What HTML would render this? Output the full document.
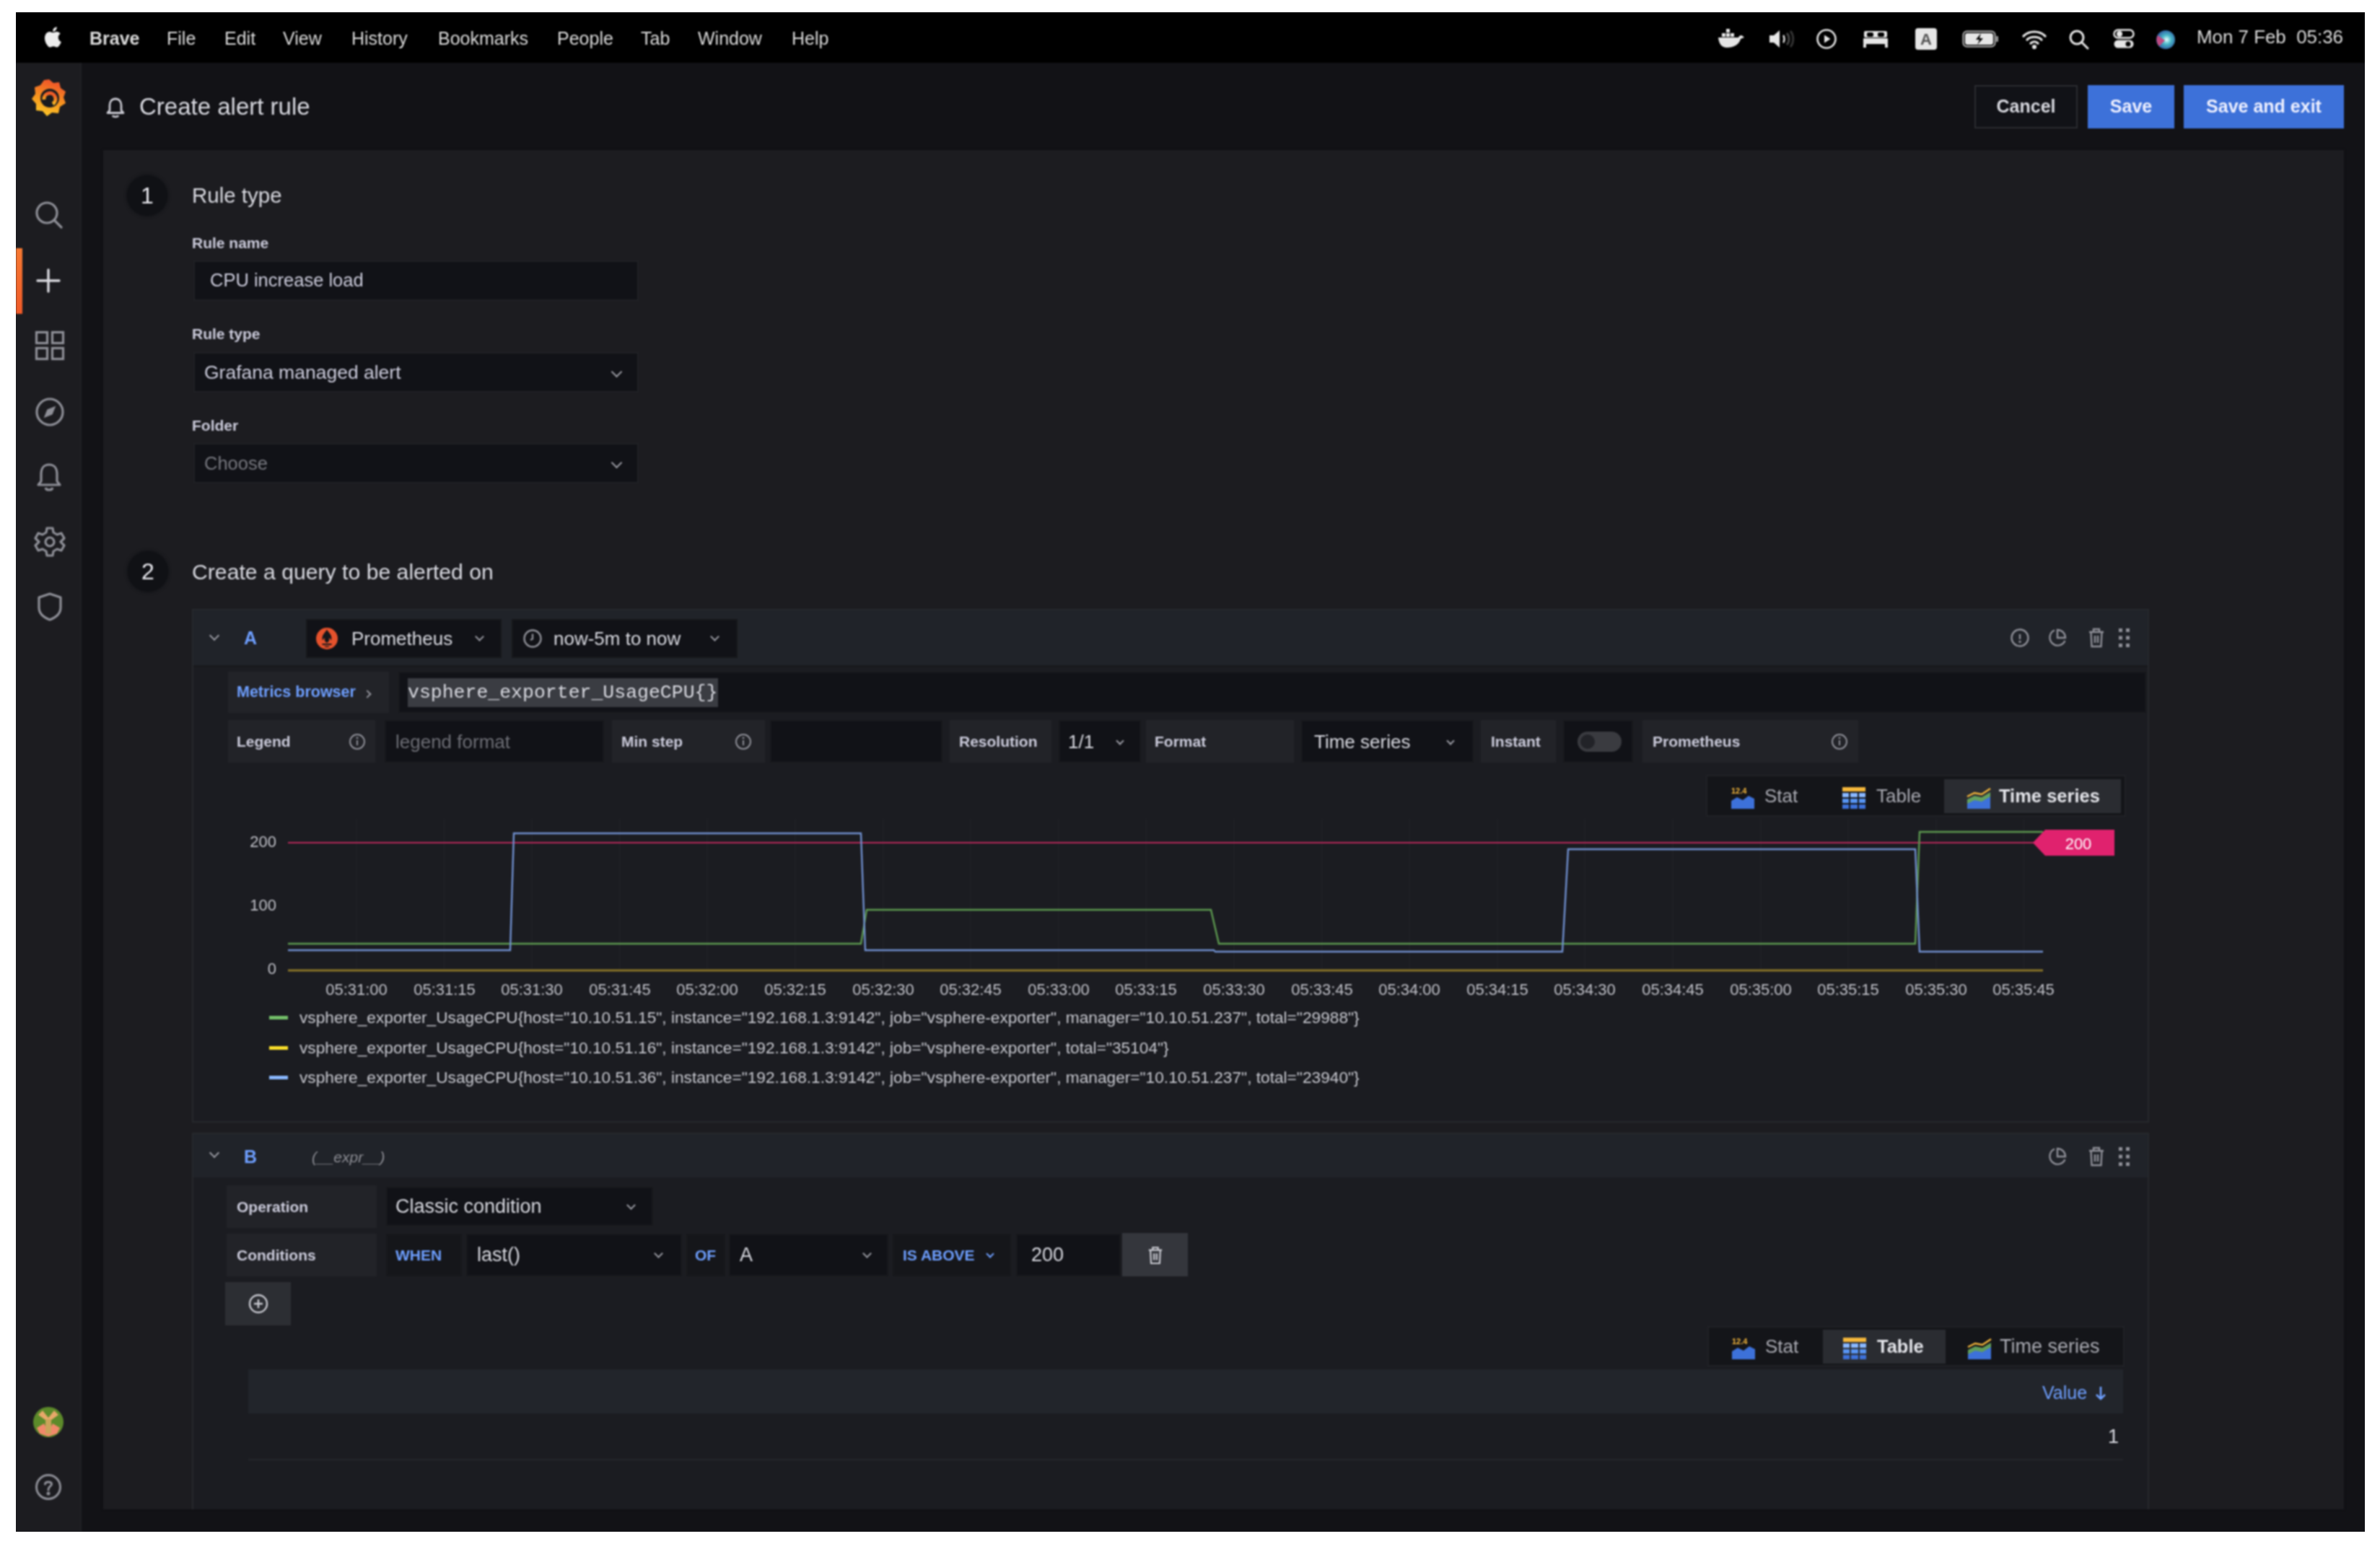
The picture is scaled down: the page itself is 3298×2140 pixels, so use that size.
<!DOCTYPE html>
<html><head><meta charset="utf-8">
<style>
*{margin:0;padding:0;box-sizing:border-box}
html,body{width:3298px;height:2140px;background:#fff;overflow:hidden;font-family:"Liberation Sans",sans-serif}
#root{position:absolute;left:0;top:0;width:3298px;height:2140px;background:#121216;filter:blur(0.8px);clip-path:inset(17px 21px 17px 22px)}
.a{position:absolute}
#screen{position:absolute;left:22px;top:17px;width:3255px;height:2106px;background:#121216;overflow:hidden}
#menubar{position:absolute;left:22px;top:17px;width:3255px;height:70px;background:#000;color:#dcdcdc;font-size:25px}
.mi{position:absolute;top:0;line-height:72px;white-space:nowrap}
#sidebar{position:absolute;left:22px;top:87px;width:91px;height:2036px;background:#1c1c20;border-right:2px solid #1f2024}
#card{position:absolute;left:143px;top:208px;width:3105px;height:1884px;background:#1c1c20;box-shadow:0 0 3px #0e0f12}
.t{position:absolute;white-space:nowrap;color:#ccccdc}
.lbl{font-weight:bold;font-size:21px;color:#ccccdc}
.inp{position:absolute;background:#111217;border:2px solid #1f2024}
.box{position:absolute;background:#222328}
.step{position:absolute;width:56px;height:56px;border-radius:50%;background:#101115;color:#e8e8ee;font-size:32px;text-align:center;line-height:56px;box-shadow:0 0 4px 1px #121317}
.title{font-size:29.5px;color:#d8d9e0}
.chev{position:absolute;width:11px;height:11px;border-right:2.5px solid #9a9ba3;border-bottom:2.5px solid #9a9ba3;transform:rotate(45deg)}
.btn{position:absolute;text-align:center;color:#eef0ff;font-size:25px;font-weight:bold;line-height:58px}
</style></head><body><div id="root">
<div id="screen"></div>
<div id="menubar">
  <div class="mi" style="left:38px;top:19px;line-height:0"><svg width="25" height="30" viewBox="0 0 26 30"><path fill="#eee" d="M21.5 16c0-3.6 3-5.3 3.1-5.4-1.7-2.5-4.3-2.8-5.2-2.8-2.2-.2-4.3 1.3-5.4 1.3-1.1 0-2.8-1.3-4.7-1.3C6.9 7.9 4.6 9.3 3.3 11.5c-2.6 4.5-.7 11.2 1.9 14.9 1.2 1.8 2.7 3.8 4.6 3.7 1.9-.1 2.6-1.2 4.8-1.2s2.9 1.2 4.8 1.2c2 0 3.2-1.8 4.4-3.6 1.4-2 2-4 2-4.1-.1 0-3.9-1.5-4.3-6.4zM18 5.3c1-1.2 1.7-2.9 1.5-4.6-1.5.1-3.2 1-4.3 2.2-.9 1.1-1.7 2.8-1.5 4.5 1.6.1 3.3-.9 4.3-2.1z"/></svg></div>
  <div class="mi" style="left:102px;font-weight:bold">Brave</div>
  <div class="mi" style="left:209px">File</div>
  <div class="mi" style="left:289px">Edit</div>
  <div class="mi" style="left:370px">View</div>
  <div class="mi" style="left:465px">History</div>
  <div class="mi" style="left:585px">Bookmarks</div>
  <div class="mi" style="left:750px">People</div>
  <div class="mi" style="left:866px">Tab</div>
  <div class="mi" style="left:945px">Window</div>
  <div class="mi" style="left:1075px">Help</div>
  <div class="mi" style="left:3022px;top:-2px;font-size:25.9px">Mon 7 Feb&nbsp;&nbsp;05:36</div>
</div>

<!-- menubar right icons -->
<svg class="a" style="left:2380px;top:38px" width="38" height="30" viewBox="0 0 38 30" fill="#e6e6e6"><rect x="12" y="2" width="5" height="5"/><rect x="6" y="8" width="5" height="5"/><rect x="12" y="8" width="5" height="5"/><rect x="18" y="8" width="5" height="5"/><path d="M1 14 H29 C30 11 33 10 35 12 C36 13 37 14 37 14 C35 15 33 15 32 16 C30 24 22 28 13 28 C6 28 2 23 1 14 Z"/></svg>
<svg class="a" style="left:2450px;top:40px" width="38" height="28" viewBox="0 0 38 28"><path d="M2 9 H8 L16 2 V26 L8 19 H2 Z" fill="#e6e6e6"/><path d="M21 9 C23 11 23 17 21 19" stroke="#e6e6e6" stroke-width="2.5" fill="none"/><path d="M26 6 C30 10 30 18 26 22" stroke="#444" stroke-width="3" fill="none"/><path d="M31 3 C36 9 36 19 31 25" stroke="#333" stroke-width="3" fill="none"/></svg>
<svg class="a" style="left:2516px;top:39px" width="30" height="30" viewBox="0 0 30 30" fill="none" stroke="#e6e6e6" stroke-width="2.6"><circle cx="15" cy="15" r="12.5"/><path d="M12 9.5 L20.5 15 L12 20.5 Z" fill="#e6e6e6" stroke="none"/></svg>
<svg class="a" style="left:2581px;top:41px" width="36" height="26" viewBox="0 0 36 26" fill="#e6e6e6"><rect x="2" y="2" width="32" height="9" rx="2"/><rect x="1" y="12" width="34" height="8" rx="1"/><rect x="1" y="20" width="4" height="5"/><rect x="31" y="20" width="4" height="5"/><rect x="6" y="4" width="9" height="6" rx="2" fill="#000"/><rect x="21" y="4" width="9" height="6" rx="2" fill="#000"/></svg>
<div class="a" style="left:2654px;top:39px;width:30px;height:30px;background:#e6e6e6;border-radius:4px;color:#555;font-size:22px;font-weight:bold;text-align:center;line-height:31px">A</div>
<svg class="a" style="left:2719px;top:42px" width="52" height="24" viewBox="0 0 52 24"><rect x="1.5" y="1.5" width="44" height="21" rx="5" fill="none" stroke="#bbb" stroke-width="2"/><rect x="4" y="4" width="39" height="16" rx="3" fill="#e6e6e6"/><rect x="47" y="8" width="3" height="8" rx="1" fill="#999"/><path d="M26 4 L19 13 H24 L21 20 L29 11 H24 Z" fill="#000"/></svg>
<svg class="a" style="left:2801px;top:40px" width="36" height="28" viewBox="0 0 36 28" fill="none" stroke="#e6e6e6" stroke-width="3.2" stroke-linecap="round"><path d="M3 10 C11 2 25 2 33 10"/><path d="M8 15 C13 10 23 10 28 15"/><path d="M13 20 C16 17 20 17 23 20"/><circle cx="18" cy="25" r="1.5" fill="#e6e6e6"/></svg>
<svg class="a" style="left:2866px;top:40px" width="30" height="30" viewBox="0 0 30 30" fill="none" stroke="#e6e6e6" stroke-width="3"><circle cx="12" cy="12" r="9"/><path d="M19 19 L27 27" stroke-linecap="round"/></svg>
<svg class="a" style="left:2928px;top:40px" width="30" height="28" viewBox="0 0 30 28"><rect x="1.5" y="1.5" width="27" height="11" rx="5.5" fill="none" stroke="#e6e6e6" stroke-width="2.5"/><circle cx="9" cy="7" r="4" fill="#e6e6e6"/><rect x="1.5" y="15.5" width="27" height="11" rx="5.5" fill="#e6e6e6"/><circle cx="21" cy="21" r="3.5" fill="#000"/></svg>
<svg class="a" style="left:2986px;top:40px" width="30" height="30" viewBox="0 0 30 30"><defs><radialGradient id="siri" cx="0.55" cy="0.5" r="0.6"><stop offset="0" stop-color="#e8ffff"/><stop offset="0.4" stop-color="#4ab8c8"/><stop offset="1" stop-color="#2a4a9a"/></radialGradient></defs><circle cx="15" cy="15" r="13" fill="url(#siri)"/><path d="M4 9 A13 13 0 0 0 6 24 L14 16 Z" fill="#c04a80"/></svg>

<div id="sidebar"></div>
<div id="card"></div>


<!-- sidebar icons -->
<svg class="a" style="left:43px;top:108px" width="50" height="54" viewBox="0 0 50 54">
 <defs><linearGradient id="gl" x1="0" y1="1" x2="0.3" y2="0"><stop offset="0" stop-color="#fcd32c"/><stop offset="0.5" stop-color="#f79a1e"/><stop offset="1" stop-color="#f05a28"/></linearGradient></defs>
 <path fill="url(#gl)" d="M25 2 L31 7 L39 6 L41 14 L48 19 L45 27 L48 35 L40 40 L38 49 L29 48 L22 53 L16 46 L7 45 L7 36 L1 29 L6 22 L5 13 L13 10 L18 3 Z"/>
 <circle cx="26" cy="28" r="13" fill="#1a1b1f"/>
 <path fill="none" stroke="url(#gl)" stroke-width="5" d="M18 30 A8 8 0 1 1 30 36"/>
 <circle cx="26" cy="28" r="3.5" fill="#1a1b1f"/>
</svg>
<div class="a" style="left:22px;top:344px;width:9px;height:91px;background:linear-gradient(#f77a32,#f05a28)"></div>
<svg class="a" style="left:47px;top:277px" width="42" height="42" viewBox="0 0 42 42" fill="none" stroke="#8e8f97" stroke-width="3.2" stroke-linecap="round"><circle cx="18" cy="18" r="14"/><path d="M28 28 L38 38"/></svg>
<svg class="a" style="left:50px;top:372px" width="34" height="34" viewBox="0 0 34 34" fill="none" stroke="#d8d8de" stroke-width="3.4" stroke-linecap="round"><path d="M17 2 V32 M2 17 H32"/></svg>
<svg class="a" style="left:48px;top:458px" width="42" height="42" viewBox="0 0 42 42" fill="none" stroke="#8e8f97" stroke-width="3.2"><rect x="2.5" y="2.5" width="15" height="15"/><rect x="24.5" y="2.5" width="15" height="15"/><rect x="2.5" y="24.5" width="15" height="15"/><rect x="24.5" y="24.5" width="15" height="15"/></svg>
<svg class="a" style="left:48px;top:550px" width="42" height="42" viewBox="0 0 42 42" fill="none" stroke="#8e8f97" stroke-width="3.2"><circle cx="21" cy="21" r="18"/><path d="M28 14 L24 24 L14 28 L18 18 Z" fill="#8e8f97" stroke-width="1.5"/></svg>
<svg class="a" style="left:49px;top:640px" width="38" height="42" viewBox="0 0 38 42" fill="none" stroke="#8e8f97" stroke-width="3.2" stroke-linejoin="round"><path d="M19 4 C11 4 8 10 8 17 V27 L4 32 H34 L30 27 V17 C30 10 27 4 19 4 Z"/><path d="M14 36 C15 40 23 40 24 36"/></svg>
<svg class="a" style="left:47px;top:729px" width="44" height="44" viewBox="0 0 44 44" fill="none" stroke="#8e8f97" stroke-width="3.2" stroke-linejoin="round"><path d="M18 3 H26 L27 9 L32 12 L38 10 L42 17 L37 22 L42 27 L38 34 L32 32 L27 35 L26 41 H18 L17 35 L12 32 L6 34 L2 27 L7 22 L2 17 L6 10 L12 12 L17 9 Z"/><circle cx="22" cy="22" r="6"/></svg>
<svg class="a" style="left:51px;top:820px" width="36" height="42" viewBox="0 0 36 42" fill="none" stroke="#8e8f97" stroke-width="3.2" stroke-linejoin="round"><path d="M18 3 L33 8 V22 C33 31 26 36 18 39 C10 36 3 31 3 22 V8 Z"/></svg>
<svg class="a" style="left:45px;top:1949px" width="44" height="44" viewBox="0 0 44 44"><circle cx="22" cy="22" r="21" fill="#5c8a2a"/><path d="M8 12 L22 22 L36 12 L30 6 L22 16 L14 6 Z" fill="#e8a86a"/><path d="M6 30 L16 24 L22 36 L28 24 L38 30 L34 38 L22 42 L10 38 Z" fill="#f0896a"/><rect x="18" y="18" width="8" height="20" fill="#c9a45a"/></svg>
<svg class="a" style="left:48px;top:2042px" width="38" height="38" viewBox="0 0 38 38" fill="none" stroke="#8e8f97" stroke-width="3"><circle cx="19" cy="19" r="16.5"/><path d="M14.5 15 C14.5 11 23.5 11 23.5 15 C23.5 18 19 18.5 19 22 V23" stroke-linecap="round"/><circle cx="19" cy="28" r="1" fill="#8e8f97"/></svg>
<!-- header bell -->
<svg class="a" style="left:146px;top:134px" width="28" height="30" viewBox="0 0 28 30" fill="none" stroke="#c8c8d0" stroke-width="2.8" stroke-linejoin="round"><path d="M14 3 C8 3 6 8 6 12 V19 L3 22.5 H25 L22 19 V12 C22 8 20 3 14 3 Z"/><path d="M10 26 C11 28.5 17 28.5 18 26"/></svg>

<!-- header -->
<div class="t" style="left:193px;top:128px;font-size:33px;line-height:40px;color:#d8d9e0">Create alert rule</div>
<div class="btn" style="left:2736px;top:118px;width:143px;height:60px;border:2px solid #2a2b30;background:#111217;color:#d8d9e0;line-height:54px;font-size:25px">Cancel</div>
<div class="btn" style="left:2893px;top:118px;width:120px;height:60px;background:#3d71d9">Save</div>
<div class="btn" style="left:3026px;top:118px;width:222px;height:60px;background:#3d71d9">Save and exit</div>

<!-- step 1 -->
<div class="step" style="left:176px;top:243px">1</div>
<div class="t title" style="left:266px;top:253px;line-height:36px">Rule type</div>
<div class="t lbl" style="left:266px;top:325px;line-height:24px">Rule name</div>
<div class="inp" style="left:268px;top:361px;width:617px;height:56px"></div>
<div class="t" style="left:291px;top:372px;font-size:25.5px;line-height:32px">CPU increase load</div>
<div class="t lbl" style="left:266px;top:451px;line-height:24px">Rule type</div>
<div class="inp" style="left:268px;top:488px;width:617px;height:56px"></div>
<div class="t" style="left:283px;top:500px;font-size:26.5px;line-height:32px">Grafana managed alert</div>
<div class="chev" style="left:849px;top:510px"></div>
<div class="t lbl" style="left:266px;top:578px;line-height:24px">Folder</div>
<div class="inp" style="left:268px;top:614px;width:617px;height:56px"></div>
<div class="t" style="left:283px;top:626px;font-size:25.5px;line-height:32px;color:#77787f">Choose</div>
<div class="chev" style="left:849px;top:636px"></div>

<!-- step 2 -->
<div class="step" style="left:177px;top:764px">2</div>
<div class="t title" style="left:266px;top:775px;line-height:36px;font-size:30.2px">Create a query to be alerted on</div>


<!-- Query A -->
<div class="a" style="left:266px;top:844px;width:2712px;height:712px;border:2px solid #26282c;background:#1b1c21"></div>
<div class="a" style="left:268px;top:846px;width:2708px;height:76px;background:#202329"></div><div class="a" style="left:268px;top:922px;width:2708px;height:3px;background:#18191d"></div>
<div class="chev" style="left:292px;top:876px;width:10px;height:10px;border-width:2px"></div>
<div class="t" style="left:338px;top:868px;font-size:25px;line-height:32px;color:#6e9fff;font-weight:bold">A</div>
<div class="inp" style="left:424px;top:858px;width:271px;height:54px;border-color:#16171b"></div>
<svg class="a" style="left:437px;top:869px" width="32" height="32" viewBox="0 0 32 32"><circle cx="16" cy="16" r="15" fill="#e6522c"/><path d="M16 3.5 C19 9 24 11 22 19 C21 16 19 15 19 15 C20 19 18 21 16 22 C14 21 12 19 13 15 C13 15 11 16 10 19 C8 11 13 9 16 3.5 Z M9.5 23 H22.5 V25 H9.5 Z M12.5 26.5 H19.5 C19.5 28.5 12.5 28.5 12.5 26.5 Z" fill="#15161a"/></svg>
<div class="t" style="left:487px;top:869px;font-size:26px;line-height:32px;color:#d8d9e0">Prometheus</div>
<div class="chev" style="left:660px;top:878px;width:9px;height:9px;border-width:2px"></div>
<div class="inp" style="left:709px;top:858px;width:313px;height:54px;border-color:#16171b"></div>
<svg class="a" style="left:724px;top:871px" width="28" height="28" viewBox="0 0 28 28" fill="none" stroke="#8e8f97" stroke-width="2.4"><circle cx="14" cy="14" r="11.5"/><path d="M14 7.5 V14.5 L11 16"/></svg>
<div class="t" style="left:767px;top:869px;font-size:26px;line-height:32px;color:#d8d9e0">now-5m to now</div>
<div class="chev" style="left:986px;top:878px;width:9px;height:9px;border-width:2px"></div>
<svg class="a" style="left:2785px;top:870px" width="28" height="28" viewBox="0 0 28 28" fill="none" stroke="#8e8f97" stroke-width="2.4"><circle cx="14" cy="14" r="11.5"/><path d="M14 9 V16"/><circle cx="14" cy="19.5" r="0.6" fill="#8e8f97"/></svg>
<svg class="a" style="left:2837px;top:870px" width="28" height="28" viewBox="0 0 28 28" fill="none" stroke="#8e8f97" stroke-width="2.4"><path d="M10 3.5 A11 11 0 1 0 24.5 18"/><path d="M14 3 A11 11 0 0 1 25 14 H14 Z"/></svg>
<svg class="a" style="left:2893px;top:869px" width="24" height="30" viewBox="0 0 24 30" fill="none" stroke="#8e8f97" stroke-width="2.4"><path d="M2 7 H22 M8 7 V3 H16 V7 M4.5 7 L5.5 27 H18.5 L19.5 7 M10 12 V22 M14 12 V22"/></svg>
<svg class="a" style="left:2934px;top:869px" width="20" height="30" viewBox="0 0 20 30" fill="#8e8f97"><rect x="2" y="2" width="5" height="5"/><rect x="12" y="2" width="5" height="5"/><rect x="2" y="12.5" width="5" height="5"/><rect x="12" y="12.5" width="5" height="5"/><rect x="2" y="23" width="5" height="5"/><rect x="12" y="23" width="5" height="5"/></svg>

<!-- row 2 -->
<div class="box" style="left:316px;top:931px;width:223px;height:57px"></div>
<div class="t" style="left:328px;top:945px;font-size:21.5px;line-height:28px;color:#6e9fff;font-weight:bold">Metrics browser</div>
<div class="chev" style="left:505px;top:958px;width:8px;height:8px;border-width:2px;transform:rotate(-45deg);border-color:#8e8f97"></div>
<div class="inp" style="left:552px;top:931px;width:2422px;height:57px;border-color:#17181c"></div>
<div class="a" style="left:565px;top:940px;width:430px;height:40px;background:#3a3c42"></div>
<div class="t" style="left:565px;top:942px;font-family:'Liberation Mono',monospace;font-size:26.5px;line-height:36px;color:#d8d9e0">vsphere_exporter_UsageCPU{}</div>

<!-- row 3 -->
<div class="box" style="left:316px;top:998px;width:204px;height:59px"></div>
<div class="t lbl" style="left:328px;top:1014px;line-height:28px">Legend</div>
<svg class="a" style="left:483px;top:1016px" width="24" height="24" viewBox="0 0 24 24" fill="none" stroke="#8e8f97" stroke-width="2"><circle cx="12" cy="12" r="10"/><path d="M12 10 V17"/><circle cx="12" cy="6.8" r="0.5" fill="#8e8f97"/></svg>
<div class="inp" style="left:533px;top:998px;width:304px;height:59px;border-color:#17181c"></div>
<div class="t" style="left:548px;top:1012px;font-size:26px;line-height:32px;color:#6d6e75">legend format</div>
<div class="box" style="left:848px;top:998px;width:212px;height:59px"></div>
<div class="t lbl" style="left:861px;top:1014px;line-height:28px">Min step</div>
<svg class="a" style="left:1018px;top:1016px" width="24" height="24" viewBox="0 0 24 24" fill="none" stroke="#8e8f97" stroke-width="2"><circle cx="12" cy="12" r="10"/><path d="M12 10 V17"/><circle cx="12" cy="6.8" r="0.5" fill="#8e8f97"/></svg>
<div class="inp" style="left:1067px;top:998px;width:239px;height:59px;border-color:#17181c"></div>
<div class="box" style="left:1316px;top:998px;width:141px;height:59px"></div>
<div class="t lbl" style="left:1329px;top:1014px;line-height:28px">Resolution</div>
<div class="inp" style="left:1467px;top:998px;width:114px;height:59px;border-color:#17181c"></div>
<div class="t" style="left:1480px;top:1012px;font-size:26px;line-height:32px;color:#d8d9e0">1/1</div>
<div class="chev" style="left:1548px;top:1023px;width:8px;height:8px;border-width:2px"></div>
<div class="box" style="left:1588px;top:998px;width:205px;height:59px"></div>
<div class="t lbl" style="left:1600px;top:1014px;line-height:28px">Format</div>
<div class="inp" style="left:1803px;top:998px;width:239px;height:59px;border-color:#17181c"></div>
<div class="t" style="left:1821px;top:1012px;font-size:26px;line-height:32px;color:#d8d9e0">Time series</div>
<div class="chev" style="left:2006px;top:1023px;width:8px;height:8px;border-width:2px"></div>
<div class="box" style="left:2052px;top:998px;width:104px;height:59px"></div>
<div class="t lbl" style="left:2066px;top:1014px;line-height:28px">Instant</div>
<div class="inp" style="left:2166px;top:998px;width:97px;height:59px;border-color:#17181c"></div>
<div class="a" style="left:2186px;top:1014px;width:61px;height:28px;border-radius:14px;background:#3a3b40"></div>
<div class="a" style="left:2190px;top:1018px;width:20px;height:20px;border-radius:50%;background:#222328"></div>
<div class="box" style="left:2276px;top:998px;width:299px;height:59px"></div>
<div class="t lbl" style="left:2290px;top:1014px;line-height:28px">Prometheus</div>
<svg class="a" style="left:2537px;top:1016px" width="24" height="24" viewBox="0 0 24 24" fill="none" stroke="#8e8f97" stroke-width="2"><circle cx="12" cy="12" r="10"/><path d="M12 10 V17"/><circle cx="12" cy="6.8" r="0.5" fill="#8e8f97"/></svg>


<!-- tabs A -->
<div class="a" style="left:2364px;top:1074px;width:582px;height:58px;background:#141519;border:2px solid #202126"></div>
<div class="a" style="left:2694px;top:1080px;width:245px;height:47px;background:#2a2c31"></div>

<svg class="a" style="left:2398px;top:1090px" width="34" height="32" viewBox="0 0 34 32"><text x="1" y="10" font-family="Liberation Sans" font-weight="bold" font-size="11" fill="#f5b73b">12.4</text><path d="M1 20 L9 15 L17 19 L25 13 L33 17 V31 H1 Z" fill="#3d71d9"/></svg>
<div class="t" style="left:2445px;top:1087px;font-size:26px;line-height:32px;color:#a9aab2">Stat</div>
<svg class="a" style="left:2553px;top:1090px" width="32" height="32" viewBox="0 0 32 32"><rect x="0" y="1" width="32" height="6" fill="#f5b73b"/><rect x="0" y="9" width="9" height="6" fill="#8ab8ff"/><rect x="11" y="9" width="10" height="6" fill="#8ab8ff"/><rect x="23" y="9" width="9" height="6" fill="#8ab8ff"/><rect x="0" y="17" width="9" height="6" fill="#5794f2"/><rect x="11" y="17" width="10" height="6" fill="#5794f2"/><rect x="23" y="17" width="9" height="6" fill="#5794f2"/><rect x="0" y="25" width="9" height="6" fill="#3d71d9"/><rect x="11" y="25" width="10" height="6" fill="#3d71d9"/><rect x="23" y="25" width="9" height="6" fill="#3d71d9"/></svg>
<div class="t" style="left:2600px;top:1087px;font-size:26px;line-height:32px;color:#a9aab2">Table</div>
<svg class="a" style="left:2724px;top:1090px" width="36" height="32" viewBox="0 0 36 32"><path d="M2 14 L12 9 L22 11 L34 3" stroke="#f5b73b" stroke-width="2.5" fill="none"/><path d="M2 18 L12 13 L22 15 L34 8 V24 L22 26 L12 24 L2 27 Z" fill="#73bf69" opacity="0.8"/><path d="M2 24 L12 19 L22 21 L34 14 V31 H2 Z" fill="#3d71d9"/></svg>
<div class="t" style="left:2770px;top:1087px;font-size:25.5px;line-height:32px;color:#e4e5ea;font-weight:bold">Time series</div>

<!-- chart -->
<div class="t" style="left:323px;top:1153px;width:60px;text-align:right;font-size:22px;line-height:28px;color:#c0c1c8">200</div>
<div class="t" style="left:323px;top:1241px;width:60px;text-align:right;font-size:22px;line-height:28px;color:#c0c1c8">100</div>
<div class="t" style="left:323px;top:1329px;width:60px;text-align:right;font-size:22px;line-height:28px;color:#c0c1c8">0</div>
<svg class="a" style="left:399px;top:0px" width="2560" height="1400" viewBox="399 0 2560 1400">
 <g stroke="#212227" stroke-width="1.5"><line x1="494.0" y1="1135" x2="494.0" y2="1345" /><line x1="615.6" y1="1135" x2="615.6" y2="1345" /><line x1="737.2" y1="1135" x2="737.2" y2="1345" /><line x1="858.8" y1="1135" x2="858.8" y2="1345" /><line x1="980.4" y1="1135" x2="980.4" y2="1345" /><line x1="1102.0" y1="1135" x2="1102.0" y2="1345" /><line x1="1223.6" y1="1135" x2="1223.6" y2="1345" /><line x1="1345.2" y1="1135" x2="1345.2" y2="1345" /><line x1="1466.8" y1="1135" x2="1466.8" y2="1345" /><line x1="1588.4" y1="1135" x2="1588.4" y2="1345" /><line x1="1710.0" y1="1135" x2="1710.0" y2="1345" /><line x1="1831.6" y1="1135" x2="1831.6" y2="1345" /><line x1="1953.2" y1="1135" x2="1953.2" y2="1345" /><line x1="2074.8" y1="1135" x2="2074.8" y2="1345" /><line x1="2196.4" y1="1135" x2="2196.4" y2="1345" /><line x1="2318.0" y1="1135" x2="2318.0" y2="1345" /><line x1="2439.6" y1="1135" x2="2439.6" y2="1345" /><line x1="2561.2" y1="1135" x2="2561.2" y2="1345" /><line x1="2682.8" y1="1135" x2="2682.8" y2="1345" /><line x1="2804.4" y1="1135" x2="2804.4" y2="1345" /></g>
 <path d="M399 1168 H2831" stroke="#b8285a" stroke-width="2.2" fill="none"/>
 <path d="M399 1345 H2831" stroke="#8a7428" stroke-width="3" fill="none"/>
 <path d="M399 1308 H1193 L1201 1261 H1678 L1689 1308 H2654 L2660 1153 H2831" stroke="#5d9a50" stroke-width="2.4" fill="none"/>
 <path d="M399 1317 H707 L712 1155 H1193 L1199 1317 H1682 L1684 1319 H2165 L2173 1177 H2654 L2660 1319 H2831" stroke="#7090d0" stroke-width="2.4" fill="none"/>
 <path d="M2817 1168 L2834 1150 H2930 V1186 H2834 Z" fill="#e0226e"/>
 <text x="2880" y="1177" text-anchor="middle" font-family="Liberation Sans" font-size="22" fill="#fff">200</text>
</svg>
<div class="t" style="left:449px;top:1358px;width:90px;font-size:22px;line-height:28px;color:#c0c1c8;text-align:center">05:31:00</div>
<div class="t" style="left:571px;top:1358px;width:90px;font-size:22px;line-height:28px;color:#c0c1c8;text-align:center">05:31:15</div>
<div class="t" style="left:692px;top:1358px;width:90px;font-size:22px;line-height:28px;color:#c0c1c8;text-align:center">05:31:30</div>
<div class="t" style="left:814px;top:1358px;width:90px;font-size:22px;line-height:28px;color:#c0c1c8;text-align:center">05:31:45</div>
<div class="t" style="left:935px;top:1358px;width:90px;font-size:22px;line-height:28px;color:#c0c1c8;text-align:center">05:32:00</div>
<div class="t" style="left:1057px;top:1358px;width:90px;font-size:22px;line-height:28px;color:#c0c1c8;text-align:center">05:32:15</div>
<div class="t" style="left:1179px;top:1358px;width:90px;font-size:22px;line-height:28px;color:#c0c1c8;text-align:center">05:32:30</div>
<div class="t" style="left:1300px;top:1358px;width:90px;font-size:22px;line-height:28px;color:#c0c1c8;text-align:center">05:32:45</div>
<div class="t" style="left:1422px;top:1358px;width:90px;font-size:22px;line-height:28px;color:#c0c1c8;text-align:center">05:33:00</div>
<div class="t" style="left:1543px;top:1358px;width:90px;font-size:22px;line-height:28px;color:#c0c1c8;text-align:center">05:33:15</div>
<div class="t" style="left:1665px;top:1358px;width:90px;font-size:22px;line-height:28px;color:#c0c1c8;text-align:center">05:33:30</div>
<div class="t" style="left:1787px;top:1358px;width:90px;font-size:22px;line-height:28px;color:#c0c1c8;text-align:center">05:33:45</div>
<div class="t" style="left:1908px;top:1358px;width:90px;font-size:22px;line-height:28px;color:#c0c1c8;text-align:center">05:34:00</div>
<div class="t" style="left:2030px;top:1358px;width:90px;font-size:22px;line-height:28px;color:#c0c1c8;text-align:center">05:34:15</div>
<div class="t" style="left:2151px;top:1358px;width:90px;font-size:22px;line-height:28px;color:#c0c1c8;text-align:center">05:34:30</div>
<div class="t" style="left:2273px;top:1358px;width:90px;font-size:22px;line-height:28px;color:#c0c1c8;text-align:center">05:34:45</div>
<div class="t" style="left:2395px;top:1358px;width:90px;font-size:22px;line-height:28px;color:#c0c1c8;text-align:center">05:35:00</div>
<div class="t" style="left:2516px;top:1358px;width:90px;font-size:22px;line-height:28px;color:#c0c1c8;text-align:center">05:35:15</div>
<div class="t" style="left:2638px;top:1358px;width:90px;font-size:22px;line-height:28px;color:#c0c1c8;text-align:center">05:35:30</div>
<div class="t" style="left:2759px;top:1358px;width:90px;font-size:22px;line-height:28px;color:#c0c1c8;text-align:center">05:35:45</div>

<!-- legend -->
<div class="a" style="left:373px;top:1408px;width:26px;height:5px;background:#73bf69"></div>
<div class="a" style="left:373px;top:1450px;width:26px;height:5px;background:#fade2a"></div>
<div class="a" style="left:373px;top:1491px;width:26px;height:5px;background:#8ab8ff"></div>
<div class="t" style="left:415px;top:1396px;font-size:22.7px;line-height:28px;color:#c8c9d0">vsphere_exporter_UsageCPU{host="10.10.51.15", instance="192.168.1.3:9142", job="vsphere-exporter", manager="10.10.51.237", total="29988"}</div>
<div class="t" style="left:415px;top:1438px;font-size:22.7px;line-height:28px;color:#c8c9d0">vsphere_exporter_UsageCPU{host="10.10.51.16", instance="192.168.1.3:9142", job="vsphere-exporter", total="35104"}</div>
<div class="t" style="left:415px;top:1479px;font-size:22.7px;line-height:28px;color:#c8c9d0">vsphere_exporter_UsageCPU{host="10.10.51.36", instance="192.168.1.3:9142", job="vsphere-exporter", manager="10.10.51.237", total="23940"}</div>


<!-- Query B -->
<div class="a" style="left:266px;top:1570px;width:2712px;height:522px;border:2px solid #26282c;border-bottom:none;background:#1b1c21"></div>
<div class="a" style="left:268px;top:1572px;width:2708px;height:60px;background:#202329"></div>
<div class="chev" style="left:292px;top:1593px;width:10px;height:10px;border-width:2px"></div>
<div class="t" style="left:338px;top:1587px;font-size:25px;line-height:32px;color:#6e9fff;font-weight:bold">B</div>
<div class="t" style="left:432px;top:1588px;font-size:21px;line-height:32px;color:#8e8f96;font-style:italic">(__expr__)</div>
<svg class="a" style="left:2837px;top:1589px" width="28" height="28" viewBox="0 0 28 28" fill="none" stroke="#8e8f97" stroke-width="2.4"><path d="M10 3.5 A11 11 0 1 0 24.5 18"/><path d="M14 3 A11 11 0 0 1 25 14 H14 Z"/></svg>
<svg class="a" style="left:2893px;top:1588px" width="24" height="30" viewBox="0 0 24 30" fill="none" stroke="#8e8f97" stroke-width="2.4"><path d="M2 7 H22 M8 7 V3 H16 V7 M4.5 7 L5.5 27 H18.5 L19.5 7 M10 12 V22 M14 12 V22"/></svg>
<svg class="a" style="left:2934px;top:1588px" width="20" height="30" viewBox="0 0 20 30" fill="#8e8f97"><rect x="2" y="2" width="5" height="5"/><rect x="12" y="2" width="5" height="5"/><rect x="2" y="12.5" width="5" height="5"/><rect x="12" y="12.5" width="5" height="5"/><rect x="2" y="23" width="5" height="5"/><rect x="12" y="23" width="5" height="5"/></svg>

<div class="box" style="left:314px;top:1643px;width:208px;height:59px"></div>
<div class="t lbl" style="left:328px;top:1659px;line-height:28px">Operation</div>
<div class="inp" style="left:535px;top:1645px;width:370px;height:54px;border-color:#17181c"></div>
<div class="t" style="left:548px;top:1656px;font-size:27px;line-height:32px;color:#d8d9e0">Classic condition</div>
<div class="chev" style="left:870px;top:1666px;width:9px;height:9px;border-width:2px"></div>

<div class="box" style="left:314px;top:1710px;width:208px;height:59px"></div>
<div class="t lbl" style="left:328px;top:1726px;line-height:28px">Conditions</div>
<div class="inp" style="left:535px;top:1710px;width:105px;height:59px;border-color:#17181c;background:#15161a"></div>
<div class="t" style="left:548px;top:1726px;font-size:21px;line-height:28px;color:#6e9fff;font-weight:bold">WHEN</div>
<div class="inp" style="left:646px;top:1710px;width:299px;height:59px;border-color:#17181c"></div>
<div class="t" style="left:661px;top:1723px;font-size:27px;line-height:32px;color:#d8d9e0">last()</div>
<div class="chev" style="left:908px;top:1733px;width:9px;height:9px;border-width:2px"></div>
<div class="inp" style="left:951px;top:1710px;width:54px;height:59px;border-color:#17181c;background:#15161a"></div>
<div class="t" style="left:963px;top:1726px;font-size:21px;line-height:28px;color:#6e9fff;font-weight:bold">OF</div>
<div class="inp" style="left:1010px;top:1710px;width:221px;height:59px;border-color:#17181c"></div>
<div class="t" style="left:1025px;top:1723px;font-size:27px;line-height:32px;color:#d8d9e0">A</div>
<div class="chev" style="left:1197px;top:1733px;width:9px;height:9px;border-width:2px"></div>
<div class="inp" style="left:1237px;top:1710px;width:164px;height:59px;border-color:#17181c;background:#15161a"></div>
<div class="t" style="left:1251px;top:1726px;font-size:21px;line-height:28px;color:#6e9fff;font-weight:bold">IS ABOVE</div>
<div class="chev" style="left:1368px;top:1734px;width:8px;height:8px;border-width:2px;border-color:#6e9fff"></div>
<div class="inp" style="left:1408px;top:1710px;width:145px;height:59px;border-color:#17181c"></div>
<div class="t" style="left:1429px;top:1723px;font-size:27px;line-height:32px;color:#d8d9e0">200</div>
<div class="a" style="left:1555px;top:1709px;width:91px;height:60px;background:#34363c"></div>
<svg class="a" style="left:1590px;top:1726px" width="22" height="28" viewBox="0 0 24 30" fill="none" stroke="#c8c9d0" stroke-width="2.4"><path d="M2 7 H22 M8 7 V3 H16 V7 M4.5 7 L5.5 27 H18.5 L19.5 7 M10 12 V22 M14 12 V22"/></svg>

<div class="a" style="left:312px;top:1777px;width:91px;height:60px;background:#2c2e33"></div>
<svg class="a" style="left:343px;top:1792px" width="30" height="30" viewBox="0 0 30 30" fill="none" stroke="#c8c9d0" stroke-width="2.4"><circle cx="15" cy="15" r="12"/><path d="M15 9 V21 M9 15 H21"/></svg>

<!-- tabs B -->
<div class="a" style="left:2366px;top:1838px;width:578px;height:56px;background:#141519;border:2px solid #202126"></div>
<div class="a" style="left:2526px;top:1843px;width:170px;height:47px;background:#2a2c31"></div>
<svg class="a" style="left:2399px;top:1853px" width="34" height="32" viewBox="0 0 34 32"><text x="1" y="10" font-family="Liberation Sans" font-weight="bold" font-size="11" fill="#f5b73b">12.4</text><path d="M1 20 L9 15 L17 19 L25 13 L33 17 V31 H1 Z" fill="#3d71d9"/></svg>
<div class="t" style="left:2446px;top:1850px;font-size:26px;line-height:32px;color:#a9aab2">Stat</div>
<svg class="a" style="left:2554px;top:1853px" width="32" height="32" viewBox="0 0 32 32"><rect x="0" y="1" width="32" height="6" fill="#f5b73b"/><rect x="0" y="9" width="9" height="6" fill="#8ab8ff"/><rect x="11" y="9" width="10" height="6" fill="#8ab8ff"/><rect x="23" y="9" width="9" height="6" fill="#8ab8ff"/><rect x="0" y="17" width="9" height="6" fill="#5794f2"/><rect x="11" y="17" width="10" height="6" fill="#5794f2"/><rect x="23" y="17" width="9" height="6" fill="#5794f2"/><rect x="0" y="25" width="9" height="6" fill="#3d71d9"/><rect x="11" y="25" width="10" height="6" fill="#3d71d9"/><rect x="23" y="25" width="9" height="6" fill="#3d71d9"/></svg>
<div class="t" style="left:2601px;top:1850px;font-size:25.5px;line-height:32px;color:#e4e5ea;font-weight:bold">Table</div>
<svg class="a" style="left:2725px;top:1853px" width="36" height="32" viewBox="0 0 36 32"><path d="M2 14 L12 9 L22 11 L34 3" stroke="#f5b73b" stroke-width="2.5" fill="none"/><path d="M2 18 L12 13 L22 15 L34 8 V24 L22 26 L12 24 L2 27 Z" fill="#73bf69" opacity="0.8"/><path d="M2 24 L12 19 L22 21 L34 14 V31 H2 Z" fill="#3d71d9"/></svg>
<div class="t" style="left:2771px;top:1850px;font-size:27px;line-height:32px;color:#a9aab2">Time series</div>

<!-- table -->
<div class="a" style="left:344px;top:1898px;width:2598px;height:61px;background:#22252b"></div>
<div class="t" style="left:2830px;top:1914px;font-size:25px;line-height:32px;color:#6e9fff">Value</div>
<svg class="a" style="left:2903px;top:1920px" width="16" height="22" viewBox="0 0 16 22" fill="none" stroke="#6e9fff" stroke-width="2.6"><path d="M8 2 V19 M2 13 L8 19 L14 13"/></svg>
<div class="a" style="left:344px;top:2022px;width:2598px;height:2px;background:#24262b"></div>
<div class="t" style="left:2880px;top:1975px;width:56px;text-align:right;font-size:27px;line-height:32px;color:#d8d9e0">1</div>

</div></body></html>
